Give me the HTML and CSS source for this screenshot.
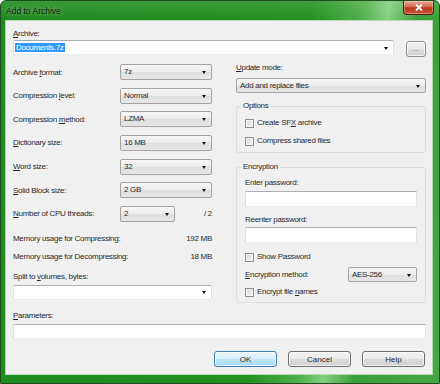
FILE: index.html
```html
<!DOCTYPE html>
<html lang="en">
<head>
    <meta charset="UTF-8">
    <title>Add to Archive</title>
    <link rel="stylesheet" href="styles.css">
</head>
<body>
    <div class="window">
        <div class="titlebar">
            <span class="title">Add to Archive</span>
            <button class="close" type="button">
                <svg width="8" height="7" viewBox="0 0 8 7"><path d="M1 0.5 L7 6.5 M7 0.5 L1 6.5" stroke="#fff" stroke-width="1.8" fill="none"/></svg>
            </button>
        </div>
        <div class="client">
            <div class="label"><u>A</u>rchive:</div>
            <div class="archive-row">
                <div class="combo edit archive"><span class="sel">Documents.7z</span><i class="arrow"></i></div>
                <button class="btn browse" type="button">...</button>
            </div>

            <div class="columns">
                <div class="col-left">
                    <div class="field"><span class="name">Archive <u>f</u>ormat:</span><div class="combo">7z<i class="arrow"></i></div></div>
                    <div class="field"><span class="name">Compression <u>l</u>evel:</span><div class="combo">Normal<i class="arrow"></i></div></div>
                    <div class="field"><span class="name">Compression <u>m</u>ethod:</span><div class="combo">LZMA<i class="arrow"></i></div></div>
                    <div class="field"><span class="name"><u>D</u>ictionary size:</span><div class="combo">16 MB<i class="arrow"></i></div></div>
                    <div class="field"><span class="name"><u>W</u>ord size:</span><div class="combo">32<i class="arrow"></i></div></div>
                    <div class="field"><span class="name"><u>S</u>olid Block size:</span><div class="combo">2 GB<i class="arrow"></i></div></div>
                    <div class="field"><span class="name"><u>N</u>umber of CPU threads:</span><div class="combo cpu">2<i class="arrow"></i></div><span class="of">/ 2</span></div>

                    <div class="mem first"><span>Memory usage for Compressing:</span><span>192 MB</span></div>
                    <div class="mem"><span>Memory usage for Decompressing:</span><span>18 MB</span></div>

                    <div class="label split">Split to <u>v</u>olumes, bytes:</div>
                    <div class="combo edit split-box"><i class="arrow"></i></div>
                </div>

                <div class="col-right">
                    <div class="label update-label"><u>U</u>pdate mode:</div>
                    <div class="combo update">Add and replace files<i class="arrow"></i></div>

                    <fieldset class="group options">
                        <legend>Options</legend>
                        <label class="check first"><span class="box"></span><span>Create SF<u>X</u> archive</span></label>
                        <label class="check"><span class="box"></span><span>Compress shared files</span></label>
                    </fieldset>

                    <fieldset class="group encryption">
                        <legend>Encryption</legend>
                        <div class="label pw-label">Enter password:</div>
                        <div class="input pw1"></div>
                        <div class="label pw-label second">Reenter password:</div>
                        <div class="input pw2"></div>
                        <label class="check show"><span class="box"></span><span>Show Password</span></label>
                        <div class="method"><span><u>E</u>ncryption method:</span><div class="combo aes">AES-256<i class="arrow"></i></div></div>
                        <label class="check names"><span class="box"></span><span>Encrypt file <u>n</u>ames</span></label>
                    </fieldset>
                </div>
            </div>

            <div class="label params"><u>P</u>arameters:</div>
            <div class="input params-box"></div>

            <div class="buttons">
                <button class="btn default" type="button">OK</button>
                <button class="btn" type="button">Cancel</button>
                <button class="btn" type="button">Help</button>
            </div>
        </div>
    </div>
</body>
</html>
```

FILE: styles.css
```css
body {
    margin: 0;
    background-color: #fff;
    font-family: "Liberation Sans", Arial, sans-serif;
}
.window {
    width: 440px;
    height: 384px;
    box-sizing: border-box;
    border: 1px solid #1d4f1d;
    border-radius: 6px 6px 0 0;
    padding: 0 6px 8px 4px;
    display: flex;
    flex-direction: column;
    background:
        linear-gradient(rgba(255, 255, 255, 0.12), rgba(255, 255, 255, 0) 18px),
        linear-gradient(100deg, #1f8a1f 0%, #24901f 62%, #4fb04b 72%, #86cf82 77%, #3b9f38 83%, #46a843 100%);
}
.titlebar {
    height: 19px;
    display: flex;
    align-items: center;
    justify-content: space-between;
    padding-left: 1px;
}
.title {
    font-size: 8.5px;
    color: #0c1a0c;
    text-shadow: 0 0 4px rgba(255, 255, 255, 0.6);
}
.close {
    align-self: flex-start;
    width: 31px;
    height: 14px;
    margin-right: -1px;
    padding: 0;
    border: 1px solid #5a1c10;
    border-top: none;
    border-radius: 0 0 4px 4px;
    background: linear-gradient(#e9a896, #d4684c 45%, #b9381d 52%, #c95533 100%);
    box-shadow: inset 0 0 0 1px rgba(255, 255, 255, 0.3);
    display: flex;
    align-items: center;
    justify-content: center;
}
.client {
    flex: 1;
    background-color: #f0f0f0;
    border: 1px solid #b6d9b4;
    padding: 8px 6px 0 7px;
    font-size: 8px;
    letter-spacing: -0.3px;
    color: #2a2a2a;
}
.label {
    height: 10px;
    line-height: 10px;
    white-space: nowrap;
}
u {
    text-underline-offset: 1px;
}

/* combo boxes */
.combo {
    position: relative;
    box-sizing: border-box;
    height: 16px;
    width: 92px;
    line-height: 14px;
    padding-left: 3px;
    border: 1px solid #a3a3a3;
    border-radius: 2px;
    background: linear-gradient(#f6f6f6, #ececec 50%, #dfdfdf 51%, #e6e6e6);
}
.combo.edit {
    background: #fff;
    border-color: #abadb3 #dbdfe6 #e3e9ef #e2e3ea;
    border-top-color: #abadb3;
}
.arrow {
    position: absolute;
    right: 5px;
    top: 50%;
    margin-top: -1px;
    width: 0;
    height: 0;
    border-left: 2.5px solid transparent;
    border-right: 2.5px solid transparent;
    border-top: 3px solid #111;
}
.archive-row {
    display: flex;
    align-items: flex-start;
    gap: 12px;
    margin-top: 1px;
}
.combo.archive {
    width: 381px;
    height: 15px;
    padding-left: 1px;
    line-height: 13px;
}
.sel {
    background-color: #3399ff;
    color: #fff;
    padding: 0 1px;
}

/* buttons */
.btn {
    font: inherit;
    color: #2a2a2a;
    box-sizing: border-box;
    width: 63px;
    height: 16px;
    padding: 0;
    border: 1px solid #707070;
    border-radius: 3px;
    background: linear-gradient(#f2f2f2, #ebebeb 50%, #dddddd 51%, #cfcfcf);
    box-shadow: inset 0 0 0 1px rgba(255, 255, 255, 0.7);
}
.btn.browse {
    width: 20px;
    margin-top: 1px;
    color: #777;
    line-height: 12px;
    border-color: #8d8d8d;
}
.btn.default {
    border-color: #3c7fb1;
    background: linear-gradient(#eaf6fd, #d9f0fc 50%, #bee6fd 51%, #a7d9f5);
}

/* two columns */
.columns {
    display: flex;
    align-items: flex-start;
    gap: 24px;
    margin-top: 5px;
}
.col-left {
    width: 199px;
    display: flex;
    flex-direction: column;
    padding-top: 2px;
}
.field {
    display: flex;
    align-items: center;
    height: 16px;
}
.field + .field {
    margin-top: 7.67px;
}
.field .name {
    width: 107px;
    white-space: nowrap;
}
.combo.cpu {
    width: 55px;
}
.of {
    margin-left: auto;
}
.mem {
    display: flex;
    justify-content: space-between;
    height: 10px;
    line-height: 10px;
    margin-top: 8px;
}
.mem.first {
    margin-top: 12px;
}
.label.split {
    margin-top: 10px;
}
.combo.split-box {
    width: 199px;
    height: 15px;
    margin-top: 3px;
}
.col-right {
    width: 190px;
    display: flex;
    flex-direction: column;
}
.update-label {
    margin-top: 1px;
}
.combo.update {
    width: 190px;
    height: 15px;
    line-height: 13px;
    margin-top: 5px;
}

/* group boxes */
.group {
    margin: 0;
    min-width: 0;
    padding: 0 8px;
    border: 1px solid #d5dfe5;
    border-radius: 3px;
}
.group legend {
    height: 10px;
    line-height: 10px;
    padding: 0 2px;
    margin-left: -4px;
}
.options {
    margin-top: 8px;
    padding-bottom: 6px;
}
.encryption {
    margin-top: 9px;
    padding-bottom: 5px;
}
.check {
    display: flex;
    align-items: center;
    gap: 3px;
    height: 10px;
    line-height: 10px;
    margin-top: 8px;
    white-space: nowrap;
}
.check.first {
    margin-top: 7px;
}
.box {
    box-sizing: border-box;
    width: 9px;
    height: 9px;
    border: 1px solid #8e8f8f;
    background: linear-gradient(135deg, #d6d6d6, #f4f4f4);
    box-shadow: inset 0 0 0 1px #f4f4f4;
}
.pw-label {
    margin-top: 6px;
}
.pw-label.second {
    margin-top: 8px;
}
.input {
    box-sizing: border-box;
    height: 16px;
    background-color: #fff;
    border: 1px solid;
    border-color: #abadb3 #e2e3ea #e3e9ef #dbdfe6;
    border-radius: 1px;
}
.pw1 {
    margin-top: 3px;
}
.pw2 {
    margin-top: 2px;
}
.check.show {
    margin-top: 9px;
}
.method {
    display: flex;
    align-items: center;
    justify-content: space-between;
    height: 15px;
    margin-top: 5px;
}
.combo.aes {
    width: 69px;
    height: 15px;
    line-height: 13px;
}
.check.names {
    margin-top: 5px;
}

/* bottom */
.label.params {
    margin-top: 8px;
}
.params-box {
    height: 15px;
    margin-top: 3px;
}
.buttons {
    display: flex;
    justify-content: flex-end;
    gap: 11px;
    margin-top: 12px;
    padding-right: 1px;
}
```
